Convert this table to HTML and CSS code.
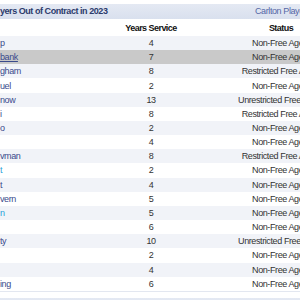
FILE: index.html
```html
<!DOCTYPE html>
<html lang="en">
<head>
    <meta charset="UTF-8">
    <title>Carlton Players Out of Contract in 2023</title>
    <link rel="stylesheet" href="styles.css">
</head>
<body>
    <div class="panel">
        <div class="panel-head">
            <span class="panel-title">yers Out of Contract in 2023</span>
            <a class="panel-link" href="#">Carlton Players</a>
        </div>
        <table class="oc-table">
            <colgroup>
                <col class="c-name">
                <col class="c-yrs">
                <col class="c-status">
            </colgroup>
            <thead>
                <tr>
                    <th class="name"></th>
                    <th>Years Service</th>
                    <th>Status</th>
                </tr>
            </thead>
            <tbody>
                <tr><td class="name"><a href="#">p</a></td><td>4</td><td>Non-Free Agent</td></tr>
                <tr class="hover"><td class="name"><a href="#">bank</a></td><td>7</td><td>Non-Free Agent</td></tr>
                <tr><td class="name"><a href="#">gham</a></td><td>8</td><td>Restricted Free Agent</td></tr>
                <tr><td class="name"><a href="#">uel</a></td><td>2</td><td>Non-Free Agent</td></tr>
                <tr><td class="name"><a href="#">now</a></td><td>13</td><td>Unrestricted Free Agent</td></tr>
                <tr><td class="name"><a href="#">i</a></td><td>8</td><td>Restricted Free Agent</td></tr>
                <tr><td class="name"><a href="#">o</a></td><td>2</td><td>Non-Free Agent</td></tr>
                <tr><td class="name"></td><td>4</td><td>Non-Free Agent</td></tr>
                <tr><td class="name"><a href="#">vman</a></td><td>8</td><td>Restricted Free Agent</td></tr>
                <tr><td class="name"><a class="visited" href="#">t</a></td><td>2</td><td>Non-Free Agent</td></tr>
                <tr><td class="name"><a href="#">t</a></td><td>4</td><td>Non-Free Agent</td></tr>
                <tr><td class="name"><a href="#">vern</a></td><td>5</td><td>Non-Free Agent</td></tr>
                <tr><td class="name"><a class="visited" href="#">n</a></td><td>5</td><td>Non-Free Agent</td></tr>
                <tr><td class="name"></td><td>6</td><td>Non-Free Agent</td></tr>
                <tr><td class="name"><a href="#">ty</a></td><td>10</td><td>Unrestricted Free Agent</td></tr>
                <tr><td class="name"></td><td>2</td><td>Non-Free Agent</td></tr>
                <tr><td class="name"></td><td>4</td><td>Non-Free Agent</td></tr>
                <tr><td class="name"><a href="#">ing</a></td><td>6</td><td>Non-Free Agent</td></tr>
            </tbody>
        </table>
    </div>
    <div class="panel-head next"></div>
</body>
</html>
```

FILE: styles.css
```css
html, body {
    overflow: hidden;
}
body {
    margin: 0;
    padding-top: 4px;
    background: #fff;
    font-family: "Liberation Sans", Arial, sans-serif;
    font-size: 9px;
    letter-spacing: -0.4px;
    color: #333;
}
.panel {
    width: 375px;
}
.panel-head {
    display: flex;
    height: 15px;
    line-height: 15px;
    background: linear-gradient(#e4e9f3, #d9e0ee);
    white-space: nowrap;
}
.panel-title {
    flex: 0 0 255px;
    font-weight: bold;
    color: #2c3b6c;
    letter-spacing: -0.45px;
}
.panel-link {
    color: #5566a6;
    text-decoration: none;
}
.next {
    width: 375px;
    margin-top: 6px;
}
.oc-table {
    border-collapse: collapse;
    table-layout: fixed;
    width: 375px;
    margin-top: 1px;
    border-bottom: 1px solid #e3e7f0;
}
.c-name { width: 115px; }
.c-yrs { width: 72px; }
.c-status { width: 188px; }
.oc-table th {
    height: 16px;
    padding: 0;
    font-weight: bold;
    color: #111;
    text-align: center;
    letter-spacing: -0.55px;
    background: #fff;
}
.oc-table td {
    height: 14.17px;
    padding: 0;
    text-align: center;
    white-space: nowrap;
    overflow: hidden;
}
.oc-table .name {
    text-align: left;
}
.oc-table tbody tr:nth-child(odd) {
    background: #f1f3f8;
}
.oc-table tbody tr.hover {
    background: #c9c9c9;
}
.oc-table td.name a {
    color: #3a4a8c;
    text-decoration: none;
}
.oc-table tr.hover td.name a {
    text-decoration: underline;
}
.oc-table td.name a.visited {
    color: #2a9fd8;
}
```
